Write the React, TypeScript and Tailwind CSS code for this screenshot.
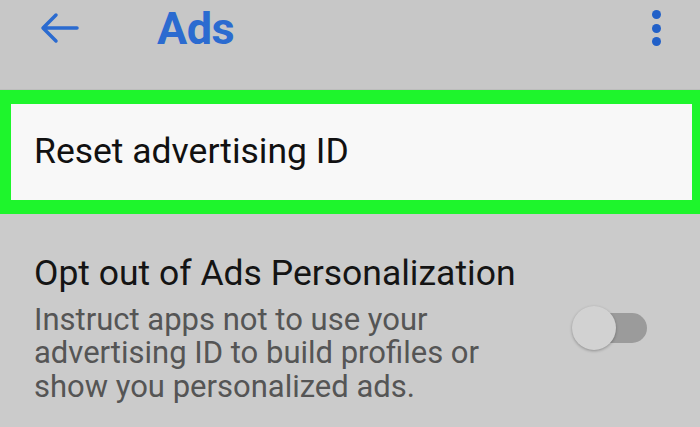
import React from "react";

export default function App() {
  return (
    <div
      className="w-[700px] h-[427px] overflow-hidden bg-[#cbcbcb]"
      style={{ fontFamily: "Roboto, 'Noto Sans', sans-serif" }}
    >
      <div className="h-[90px] bg-[#c7c7c7] border-b border-[#bdbdbd]">
        <div className="h-[56px] flex items-center">
          <svg
            className="ml-[40px]"
            width="40"
            height="32"
            viewBox="0 0 40 32"
            fill="none"
            stroke="#2b6bd0"
            strokeWidth="3.5"
            strokeLinecap="round"
            strokeLinejoin="round"
          >
            <path d="M37 16H4M16 3L3 16l13 13" />
          </svg>
          <div className="ml-[77px] text-[45px] leading-none font-bold text-[#2b6bd0] tracking-[-0.5px]">
            Ads
          </div>
          <div className="ml-auto mr-[39px] flex flex-col gap-[4.5px]">
            <span className="block w-[9px] h-[9px] rounded-full bg-[#2160c8]" />
            <span className="block w-[9px] h-[9px] rounded-full bg-[#2160c8]" />
            <span className="block w-[9px] h-[9px] rounded-full bg-[#2160c8]" />
          </div>
        </div>
      </div>
      <div className="h-[124px] border-l-[11px] border-r-[8px] border-y-[14px] border-[#1ef52c] bg-[#f8f8f8] flex items-center">
        <div className="ml-[23px] text-[35.5px] leading-none text-[#111111]">
          Reset advertising ID
        </div>
      </div>
      <div className="flex items-start pt-[39px]">
        <div className="ml-[34px]">
          <div className="text-[35.5px] leading-[40px] text-[#141414]">
            Opt out of Ads Personalization
          </div>
          <div className="mt-[9.5px] text-[31px] leading-[33.5px] text-[#555555]">
            <span className="block">Instruct apps not to use your</span>
            <span className="block">advertising ID to build profiles or</span>
            <span className="block">show you personalized ads.</span>
          </div>
        </div>
        <div className="ml-auto mr-[53px] mt-[53px] relative w-[75px] h-[44px] flex items-center">
          <div className="ml-[8px] w-[67px] h-[30px] rounded-full bg-[#9b9b9b]" />
          <div className="absolute left-0 top-0 w-[44px] h-[44px] rounded-full bg-[#d2d2d2] shadow-[0_1px_3px_rgba(0,0,0,0.3)]" />
        </div>
      </div>
    </div>
  );
}
